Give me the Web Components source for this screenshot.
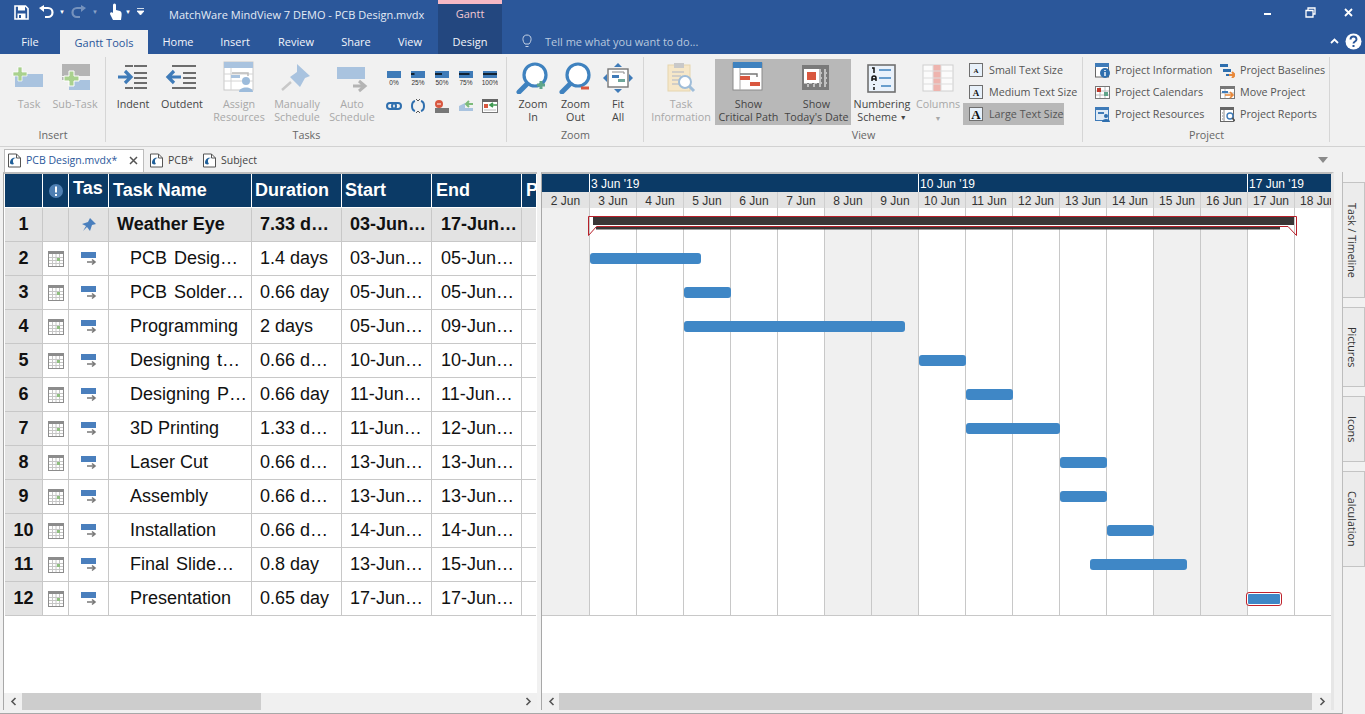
<!DOCTYPE html>
<html>
<head>
<meta charset="utf-8">
<title>MatchWare MindView 7 DEMO - PCB Design.mvdx</title>
<style>
  html, body { margin: 0; height: 100%; overflow: hidden; background: #f1f1f1; }
  body { display: flex; flex-direction: column; height: 714px; font-family: "Open Sans", "Liberation Sans", sans-serif; }
  mv-workspace { flex: 1; min-height: 0; }
</style>
</head>
<body>
<mv-titlebar></mv-titlebar>
<mv-ribbon>
  <mv-group label="Insert" style="width:106px;padding-left:6px">
    <mv-big icon="task" off w="46">Task</mv-big>
    <mv-big icon="subtask" off w="46">Sub-Task</mv-big>
  </mv-group>
  <mv-group label="Tasks" style="width:401px;padding-left:2px">
    <mv-big icon="indent" w="50">Indent</mv-big>
    <mv-big icon="outdent" w="48">Outdent</mv-big>
    <mv-big icon="assign" off w="66">Assign<br>Resources</mv-big>
    <mv-big icon="pin" off w="50">Manually<br>Schedule</mv-big>
    <mv-big icon="auto" off w="60">Auto<br>Schedule</mv-big>
    <mv-percent-grid></mv-percent-grid>
  </mv-group>
  <mv-group label="Zoom" style="width:137px;padding-left:5px">
    <mv-big icon="zoomin" w="42">Zoom<br>In</mv-big>
    <mv-big icon="zoomout" w="43">Zoom<br>Out</mv-big>
    <mv-big icon="fit" w="42">Fit<br>All</mv-big>
  </mv-group>
  <mv-group label="View" style="width:439px;padding-left:3px">
    <mv-big icon="info" off w="68">Task<br>Information</mv-big>
    <mv-big icon="critical" on w="67">Show<br>Critical Path</mv-big>
    <mv-big icon="today" on w="69">Show<br>Today's Date</mv-big>
    <mv-big icon="numbering" w="62">Numbering<br>Scheme <span style="font-size:7px;vertical-align:1px">▼</span></mv-big>
    <mv-big icon="columns" off w="50">Columns<br><span style="font-size:7px">▼</span></mv-big>
    <mv-stack style="width:101px">
      <mv-small icon="texts">Small Text Size</mv-small>
      <mv-small icon="textm">Medium Text Size</mv-small>
      <mv-small icon="textl" on>Large Text Size</mv-small>
    </mv-stack>
  </mv-group>
  <mv-group label="Project" style="width:247px;padding-left:6px;gap:0">
    <mv-stack style="width:125px">
      <mv-small icon="pinfo">Project Information</mv-small>
      <mv-small icon="pcal">Project Calendars</mv-small>
      <mv-small icon="pres">Project Resources</mv-small>
    </mv-stack>
    <mv-stack style="width:110px">
      <mv-small icon="pbase">Project Baselines</mv-small>
      <mv-small icon="pmove">Move Project</mv-small>
      <mv-small icon="prep">Project Reports</mv-small>
    </mv-stack>
  </mv-group>
</mv-ribbon>
<mv-doctabs></mv-doctabs>
<mv-workspace>
  <mv-task-table slot="left"></mv-task-table>
  <mv-gantt slot="right"></mv-gantt>
</mv-workspace>

<script>
const ICONS = {
  task: `<g transform="translate(-4 3)"><rect x="8" y="10" width="28" height="13" fill="#a9c3df"/><path d="M11 3h4v5h5v4h-5v5h-4v-5H6V8h5z" fill="#a9d18e" stroke="#fff" stroke-width=".7"/></g>`,
  subtask: `<rect x="5" y="3" width="28" height="12" fill="#b4b4b4"/><rect x="12" y="19" width="21" height="10" fill="#a9c3df"/><rect x="5" y="16" width="10" height="3" fill="#b4b4b4"/><path d="M12 10h5v5h5v5h-5v5h-5v-5H7v-5h5z" fill="#a9d18e" stroke="#fff"/>`,
  indent: `<path d="M10 5h8M10 27h8M19 5h13M19 12h13M19 17h13M19 22h13M19 27h13" stroke="#6d6d6d" stroke-width="2" fill="none"/><path d="M3 16h11M10 10l6 6-6 6" stroke="#3f7bb8" stroke-width="3.2" fill="none"/>`,
  outdent: `<path d="M8 5h24M8 27h24M19 12h13M19 17h13M19 22h13" stroke="#6d6d6d" stroke-width="2" fill="none"/><path d="M17 16H5M10 10l-6 6 6 6" stroke="#3f7bb8" stroke-width="3.2" fill="none"/>`,
  assign: `<g transform="translate(-2 0)"><rect x="5" y="1" width="29" height="28" fill="#fff" stroke="#c9c9c9"/><rect x="5" y="1" width="29" height="6" fill="#a9c3df"/><path d="M5 13h29M5 20h29M12 7v22" stroke="#d4d4d4"/><path d="M13 12h16v3" stroke="#bbb" stroke-width="1.5" fill="none"/><rect x="12" y="14" width="9" height="3" fill="#a9c3df"/><circle cx="27" cy="20" r="4" fill="#9cbbdb"/><path d="M20 31c0-6 14-6 14 0z" fill="#9cbbdb"/></g>`,
  pin: `<path d="M18 3l13 12-5 2-5 9-10-10 7-5z" fill="#a9c3df"/><path d="M12 21L3 29" stroke="#c8c8c8" stroke-width="2.5"/>`,
  auto: `<g transform="translate(0 3)"><rect x="3" y="3" width="28" height="12" fill="#a9c3df"/><path d="M19 22h11M25 17l6 5-6 5" stroke="#b4b4b4" stroke-width="3" fill="none"/></g>`,
  zoomin: `<circle cx="20" cy="14" r="11" fill="#fff" stroke="#3f82bf" stroke-width="3.2"/><path d="M12 23L4 31" stroke="#3f82bf" stroke-width="5" stroke-linecap="round"/><path d="M22 24h8M26 20v8" stroke="#5fa58a" stroke-width="3"/>`,
  zoomout: `<circle cx="20" cy="14" r="11" fill="#fff" stroke="#3f82bf" stroke-width="3.2"/><path d="M12 23L4 31" stroke="#3f82bf" stroke-width="5" stroke-linecap="round"/><path d="M23 27h8" stroke="#d9573f" stroke-width="3"/>`,
  fit: `<rect x="8" y="8" width="20" height="18" fill="#fff" stroke="#777" stroke-width="1.4"/><path d="M12 11h12v2" stroke="#888" fill="none"/><rect x="12" y="14" width="7" height="3" fill="#3f7bb8"/><rect x="18" y="18" width="7" height="3" fill="#6fa69a"/><path d="M18 2l4 4h-8zM18 32l4-4h-8zM3 17l4-4v8zM33 17l-4-4v8z" fill="#3f7bb8"/>`,
  info: `<rect x="5" y="4" width="22" height="26" fill="#f6e7c8" stroke="#e6d5ae"/><rect x="11" y="2" width="10" height="5" fill="#c9c9c9"/><path d="M9 11h12M9 15h9M9 19h7M9 23h7" stroke="#c6c6c6" stroke-width="1.5"/><circle cx="22" cy="21" r="6" fill="#fff" stroke="#9fbdd9" stroke-width="2"/><path d="M26 25l5 5" stroke="#9fbdd9" stroke-width="3"/>`,
  critical: `<g transform="translate(-2 0)"><rect x="4" y="2" width="29" height="27" fill="#fff" stroke="#8a8a8a"/><rect x="4" y="1" width="29" height="6" fill="#3f82bf"/><path d="M11 7v22" stroke="#aaa"/><path d="M11 13h17v3" stroke="#777" stroke-width="1.4" fill="none"/><rect x="11" y="15" width="10" height="4" fill="#d9573f"/><rect x="21" y="21" width="10" height="4" fill="#d9573f"/></g>`,
  today: `<g transform="translate(-2 0)"><rect x="5" y="4" width="27" height="25" fill="#7a7a7a"/><path d="M11 8v19M17 8v19M23 8v19M28 8v19M7 12h24M7 17h24M7 22h24" stroke="#d8d8d8" stroke-width="1.5" stroke-dasharray="3 2"/><rect x="7" y="8" width="15" height="14" fill="#fff"/><rect x="10" y="11" width="9" height="8" fill="#d9573f"/></g>`,
  numbering: `<g transform="translate(0 2)"><rect x="4" y="2" width="27" height="27" fill="#eaf2fb" stroke="#707070" stroke-width="1.6"/><path d="M15 7h12M15 15h12M17 23h10" stroke="#3f82bf" stroke-width="1.6"/><path d="M8 5h2v5" stroke="#111" stroke-width="1.5" fill="none"/><path d="M8 18v-3a2 2 0 014 0v3M8 16h4" stroke="#111" stroke-width="1.5" fill="none"/><path d="M10 21v1M10 24v3" stroke="#111" stroke-width="1.5"/></g>`,
  columns: `<g transform="translate(0 2)"><rect x="3" y="2" width="30" height="26" fill="#fbfbfb" stroke="#cfcfcf"/><rect x="13" y="2" width="8" height="26" fill="#eeb4ae"/><path d="M3 8h30M3 15h30M3 21h30" stroke="#ddd"/><path d="M13 2v26M21 2v26" stroke="#ddd"/></g>`,
  texts: `<rect x=".5" y=".5" width="13" height="13" fill="#e8f1fa" stroke="#6f6f6f"/><text x="7" y="10" font-family="Liberation Serif" font-size="7" font-weight="700" text-anchor="middle" fill="#111">A</text>`,
  textm: `<rect x=".5" y=".5" width="13" height="13" fill="#e8f1fa" stroke="#6f6f6f"/><text x="7" y="10.500" font-family="Liberation Serif" font-size="9" font-weight="700" text-anchor="middle" fill="#111">A</text>`,
  textl: `<rect x=".5" y=".5" width="13" height="13" fill="#e8f1fa" stroke="#6f6f6f"/><text x="7" y="12" font-family="Liberation Serif" font-size="13" font-weight="700" text-anchor="middle" fill="#111">A</text>`,
  pinfo: `<rect x=".5" y="1" width="13" height="13" fill="#fff" stroke="#666"/><rect y="0" width="14" height="4" fill="#3f7bb8"/><circle cx="10" cy="10" r="5" fill="#2f6fae"/><path d="M10 7v1M10 9v4" stroke="#fff" stroke-width="1.4"/>`,
  pcal: `<rect x=".5" y="1.500" width="14" height="12" fill="#fff" stroke="#777"/><path d="M5 2v11M10 2v11M1 6h13M1 10h13" stroke="#bbb"/><rect x="2" y="3" width="4" height="4" fill="#c0392b"/><rect x="9" y="7" width="4" height="4" fill="#5fa58a"/>`,
  pres: `<rect x=".5" y=".5" width="13" height="13" fill="#dfeaf5" stroke="#3f7bb8"/><rect y="0" width="14" height="3" fill="#3f7bb8"/><rect x="3" y="5" width="6" height="2" fill="#3f7bb8"/><circle cx="11" cy="9" r="2" fill="#2f6fae"/><path d="M7 15c0-4 8-4 8 0z" fill="#2f6fae"/>`,
  pbase: `<rect x="0" y="1" width="8" height="3" fill="#2f6fae"/><rect x="3" y="6" width="8" height="3" fill="#2f6fae"/><rect x="6" y="11" width="5" height="2" fill="#2f6fae"/><path d="M9 12h5M12 9l3 3-3 3" stroke="#e8883a" stroke-width="2" fill="none"/>`,
  pmove: `<rect x=".5" y="1.500" width="14" height="12" fill="#fff" stroke="#777"/><rect x="0" y="1" width="15" height="3" fill="#777"/><path d="M5 4v9M1 8h13" stroke="#bbb"/><rect x="2" y="6" width="6" height="2" fill="#3f7bb8"/><path d="M5 10h7M10 7l3 3-3 3" stroke="#e8883a" stroke-width="1.700" fill="none"/>`,
  prep: `<rect x=".5" y=".5" width="13" height="14" fill="#fff" stroke="#666"/><rect y="0" width="14" height="3" fill="#666"/><path d="M4 3v11M2 6h1M2 9h1M2 12h1" stroke="#888"/><circle cx="10" cy="9" r="3" fill="#fff" stroke="#3f7bb8" stroke-width="1.400"/><path d="M12 11l3 3" stroke="#555" stroke-width="1.600"/>`
}

class MvTitlebar extends HTMLElement {
  constructor() {
    super()
    this.attachShadow({mode: 'open'})
  }

  connectedCallback() {
    const white = '#fff'
    this.shadowRoot.innerHTML = `
      <style>
        :host { display: block; height: 54px; background: #2b579a; color: #fff; font-size: 11px; position: relative; }
        .top { display: flex; align-items: center; height: 28px; }
        .qat { display: flex; align-items: center; width: 169px; flex: none; padding-bottom: 4px; box-sizing: border-box; height: 28px; }
        .qat svg { display: block; flex: none; }
        .title { width: 269px; flex: none; font-size: 11px; color: #e4ebf5; white-space: nowrap; }
        .ctx { width: 64px; height: 28px; flex: none; background: #23477f; border-top: 4px solid #f5b8c4; box-sizing: border-box; color: #f3c9d2; text-align: center; line-height: 20px; }
        .win { margin-left: auto; display: flex; align-items: center; padding-bottom: 4px; }
        .tabs { display: flex; height: 26px; }
        .tab { flex: none; text-align: center; line-height: 28px; color: #f2f5fa; }
        .tab.active { background: #f1f1f1; color: #2b579a; height: 24px; margin-top: 2px; line-height: 25px; }
        .tab.design { background: #23477f; }
        .tell { margin-left: 19px; display: flex; align-items: center; gap: 12px; color: #b9c8de; }
        .right { margin-left: auto; display: flex; align-items: center; }
      </style>
      <div class="top">
        <div class="qat">
          <svg width="15" height="15" viewBox="0 0 15 15" style="margin-left:14px"><path d="M1 1h10.500l2.500 2.500V14H1z" fill="none" stroke="${white}" stroke-width="1.600"/><rect x="4" y="1" width="7" height="4.500" fill="${white}"/><rect x="3.500" y="8.500" width="8" height="5.500" fill="${white}"/><rect x="5" y="10" width="2" height="3" fill="#2b579a"/></svg>
          <svg width="16" height="15" viewBox="0 0 16 15" style="margin-left:9px"><path d="M5 3h5a4 4 0 010 9H7" stroke="${white}" stroke-width="2.200" fill="none"/><path d="M1 3l5-3v7z" fill="${white}"/></svg>
          <span style="margin-left:5px;width:9px;font-size:6px">▼</span>
          <svg width="16" height="15" viewBox="0 0 16 15" style="margin-left:3px;opacity:.35"><path d="M11 3H6a4 4 0 000 9h3" stroke="${white}" stroke-width="2.200" fill="none"/><path d="M15 3l-5-3v7z" fill="${white}"/></svg>
          <span style="margin-left:5px;width:12px;font-size:6px;opacity:.45">▼</span>
          <svg width="14" height="18" viewBox="0 0 14 18" style="margin-left:5px"><path d="M4 7V2a1.500 1.500 0 013 0v5l4 1c2 1 2 3 1 9H4L1 11c0-2 2-2 3-1z" fill="${white}"/></svg>
          <span style="margin-left:2px;width:12px;font-size:6px">▼</span>
          <svg width="7" height="8" viewBox="0 0 7 8"><path d="M0 .5h7M0 3h7l-3.500 4z" stroke="${white}" fill="${white}" stroke-width=".8"/></svg>
        </div>
        <div class="title">MatchWare MindView 7 DEMO - PCB Design.mvdx</div>
        <div class="ctx">Gantt</div>
        <div class="win">
          <svg width="10" height="4" viewBox="0 0 10 4" style="margin-right:31px;margin-top:4px"><rect y="1" width="7" height="2" fill="${white}"/></svg>
          <svg width="11" height="11" viewBox="0 0 11 11" style="margin-right:28px"><path d="M3 3V1h7v6H8M1 3.500h7v6.500H1z" stroke="${white}" stroke-width="1.300" fill="none"/></svg>
          <svg width="9" height="9" viewBox="0 0 9 9" style="margin-right:12px"><path d="M1 1l7 7M8 1L1 8" stroke="${white}" stroke-width="1.800"/></svg>
        </div>
      </div>
      <div class="tabs">
        <div class="tab" style="width:60px">File</div>
        <div class="tab active" style="width:88px">Gantt Tools</div>
        <div class="tab" style="width:60px">Home</div>
        <div class="tab" style="width:54px">Insert</div>
        <div class="tab" style="width:68px">Review</div>
        <div class="tab" style="width:52px">Share</div>
        <div class="tab" style="width:56px">View</div>
        <div class="tab design" style="width:64px">Design</div>
        <div class="tell">
          <svg width="12" height="14" viewBox="0 0 12 14"><path d="M4 10C1 7 1 1 6 1s5 6 2 9zM4.500 12.500h3" stroke="#c5d2e5" fill="none"/></svg>
          <span>Tell me what you want to do...</span>
        </div>
        <div class="right">
          <svg width="9" height="6" viewBox="0 0 9 6" style="margin-right:6px"><path d="M1 5l3.500-3.500L8 5" stroke="${white}" stroke-width="1.800" fill="none"/></svg>
          <svg width="17" height="17" viewBox="0 0 17 17" style="margin-right:3px"><circle cx="8.500" cy="8.500" r="8" fill="${white}"/><path d="M5.500 6.500a3 3 0 116 0c0 2-3 2-3 4" stroke="#2b579a" stroke-width="1.900" fill="none"/><rect x="7.500" y="12" width="2" height="2" fill="#2b579a"/></svg>
        </div>
      </div>
    `
  }
}

class MvRibbon extends HTMLElement {
  constructor() {
    super()
    this.attachShadow({mode: 'open'}).innerHTML = `
      <style>
        :host { display: flex; height: 93px; box-sizing: border-box; background: #f1f1f1; border-bottom: 1px solid #d2d2d2; font-size: 10.75px; color: #444; flex: none; }
      </style>
      <slot></slot>
    `
  }
}

class MvGroup extends HTMLElement {
  constructor() {
    super()
    this.attachShadow({mode: 'open'})
  }

  connectedCallback() {
    this.shadowRoot.innerHTML = `
      <style>
        :host { display: block; box-sizing: border-box; position: relative; flex: none; }
        :host::after { content: ''; position: absolute; right: 0; top: 3px; bottom: 4px; width: 1px; background: #d6d6d6; }
        .items { display: flex; height: 71px; padding-top: 5px; box-sizing: border-box; }
        .label { position: absolute; left: 0; right: 0; top: 74px; text-align: center; color: #666; }
      </style>
      <div class="items"><slot></slot></div>
      <div class="label">${this.getAttribute('label')}</div>
    `
  }
}

class MvBig extends HTMLElement {
  constructor() {
    super()
    this.attachShadow({mode: 'open'})
  }

  connectedCallback() {
    const off = this.hasAttribute('off')
    const on = this.hasAttribute('on')
    this.shadowRoot.innerHTML = `
      <style>
        :host { display: block; flex: none; width: ${this.getAttribute('w')}px; height: 66px; text-align: center; color: ${off ? '#a8a8a8' : '#444'}; ${on ? 'background:#b8b8b8;' : ''} line-height: 13px; white-space: nowrap; }
        svg { display: block; margin: 2px auto 4px; }
      </style>
      <svg width="36" height="33" viewBox="0 0 36 33">${ICONS[this.getAttribute('icon')]}</svg>
      <slot></slot>
    `
  }
}

class MvStack extends HTMLElement {
  constructor() {
    super()
    this.attachShadow({mode: 'open'}).innerHTML = `
      <style>:host { display: flex; flex-direction: column; flex: none; }</style>
      <slot></slot>
    `
  }
}

class MvSmall extends HTMLElement {
  constructor() {
    super()
    this.attachShadow({mode: 'open'})
  }

  connectedCallback() {
    const on = this.hasAttribute('on')
    this.shadowRoot.innerHTML = `
      <style>
        :host { display: flex; align-items: center; gap: 5px; height: 22px; padding-left: 6px; box-sizing: border-box; white-space: nowrap; color: #555; ${on ? 'background:#b8b8b8;' : ''} }
        svg { flex: none; }
      </style>
      <svg width="15" height="15" viewBox="0 0 15 15">${ICONS[this.getAttribute('icon')]}</svg>
      <slot></slot>
    `
  }
}

class MvPercentGrid extends HTMLElement {
  constructor() {
    super()
    this.attachShadow({mode: 'open'})
  }

  connectedCallback() {
    const bar = (pct, dark) => `
      <div class="cell"><svg width="16" height="16" viewBox="0 0 16 16">
        <rect x="1" y="1" width="14" height="7" fill="#3f7bb8"/>${dark ? `<rect x="1" y="${dark}" width="${pct / 100 * 14}" height="2" fill="#123"/>` : ''}
        <text x="8" y="14.500" font-family="Liberation Sans" font-size="6.500" text-anchor="middle" fill="#333">${pct}%</text>
      </svg></div>`
    this.shadowRoot.innerHTML = `
      <style>
        :host { display: grid; grid-template-columns: repeat(5, 24px); grid-auto-rows: 28px; padding-top: 11px; flex: none; }
        .cell { display: flex; justify-content: center; align-items: flex-start; }
      </style>
      ${bar(0)}${bar(25, 3)}${bar(50, 3)}${bar(75, 3)}${bar(100, 3)}
      <div class="cell"><svg width="16" height="16" viewBox="0 0 16 16"><rect x="1" y="5" width="9" height="6" rx="3" stroke="#2f6fae" stroke-width="2" fill="none"/><rect x="6" y="5" width="9" height="6" rx="3" stroke="#2f6fae" stroke-width="2" fill="none"/></svg></div>
      <div class="cell"><svg width="16" height="16" viewBox="0 0 16 16"><path d="M5 3C1 4 1 12 5 13M11 3c4 1 4 9 0 10" stroke="#2f6fae" stroke-width="2" fill="none"/><path d="M6 1l2 2M10 1L8 3M6 15l2-2M10 15l-2-2" stroke="#555"/></svg></div>
      <div class="cell"><svg width="16" height="16" viewBox="0 0 16 16"><rect x="1" y="10" width="14" height="5" fill="#777"/><circle cx="5" cy="6" r="4" fill="#d9573f"/><path d="M3 6h4" stroke="#fff"/></svg></div>
      <div class="cell"><svg width="16" height="16" viewBox="0 0 16 16"><path d="M1 8l6-3v8H1z" fill="#a9c3df"/><rect x="7" y="10" width="8" height="3" fill="#a9c3df"/><path d="M15 6H8M11 3L8 6l3 3" stroke="#7dbb7a" stroke-width="2" fill="none"/></svg></div>
      <div class="cell"><svg width="16" height="16" viewBox="0 0 16 16"><rect x=".5" y="1.500" width="15" height="13" fill="#fff" stroke="#777"/><rect y="1" width="16" height="3" fill="#666"/><rect x="2" y="6" width="4" height="4" fill="#d9573f"/><path d="M15 7H8M11 5L8 7l3 2" stroke="#3f9a52" stroke-width="1.600" fill="none"/><path d="M2 12h12" stroke="#bbb"/></svg></div>
    `
  }
}

class MvDoctabs extends HTMLElement {
  constructor() {
    super()
    this.attachShadow({mode: 'open'})
  }

  connectedCallback() {
    const icon = `<svg width="15" height="15" viewBox="0 0 15 15" style="flex:none;margin-top:2px"><path d="M1.500 1h8l4 4v9h-12z" fill="#fff" stroke="#555"/><path d="M9.500 1v4h4" fill="none" stroke="#555"/><path d="M3 10c0-5 4-6 6-5-3 0-4 3-2 6-2 1-4 0-4-1z" fill="#1f5f99"/></svg>`
    this.shadowRoot.innerHTML = `
      <style>
        :host { display: flex; height: 25px; flex: none; box-sizing: border-box; padding-left: 4px; align-items: flex-end; font-size: 10.5px; color: #444; position: relative; }
        .t { display: flex; align-items: center; gap: 4px; height: 22px; padding-bottom: 3px; box-sizing: border-box; white-space: nowrap; }
        .t.a { width: 140px; background: #fff; border: 1px solid #bdbdbd; border-bottom: 0; color: #2b579a; padding-left: 2px; height: 23px; }
        .x { margin-left: auto; margin-right: 5px; margin-top: 2px; }
        .arrow { margin-left: auto; margin-right: 37px; margin-bottom: 9px; width: 0; height: 0; border: 5px solid transparent; border-top: 6px solid #8a8a8a; border-bottom: 0; }
      </style>
      <div class="t a">${icon}<span>PCB Design.mvdx*</span>
        <svg class="x" width="9" height="9" viewBox="0 0 9 9"><path d="M1 1l7 7M8 1L1 8" stroke="#555" stroke-width="1.500"/></svg>
      </div>
      <div class="t" style="margin-left:5px;width:53px">${icon}<span>PCB*</span></div>
      <div class="t">${icon}<span>Subject</span></div>
      <div class="arrow"></div>
    `
  }
}

class MvScrollbar extends HTMLElement {
  constructor() {
    super()
    this.attachShadow({mode: 'open'})
  }

  connectedCallback() {
    this.shadowRoot.innerHTML = `
      <style>
        :host { display: flex; height: 17px; flex: none; background: #f0f0f0; align-items: stretch; }
        .b { width: 18px; flex: none; display: flex; align-items: center; justify-content: center; }
        .track { flex: 1; min-width: 0; }
        .thumb { height: 100%; background: #cdcdcd; }
      </style>
      <div class="b"><svg width="7" height="9" viewBox="0 0 7 9"><path d="M5.500 1L2 4.500 5.500 8" stroke="#555" stroke-width="1.600" fill="none"/></svg></div>
      <div class="track"><div class="thumb" style="margin-left:${this.getAttribute('start') || 0}px;width:${this.getAttribute('size')}px"></div></div>
      <div class="b"><svg width="7" height="9" viewBox="0 0 7 9"><path d="M1.500 1L5 4.500 1.500 8" stroke="#555" stroke-width="1.600" fill="none"/></svg></div>
    `
  }
}

class MvWorkspace extends HTMLElement {
  constructor() {
    super()
    this.attachShadow({mode: 'open'}).innerHTML = `
      <style>
        :host { display: flex; background: #f1f1f1; }
        .frame { display: flex; flex: none; width: 1342px; box-sizing: border-box; padding-left: 3px; padding-bottom: 3px; border-bottom: 1px solid #a8a8a8; }
        .side { flex: 1; border-left: 1px solid #bdbdbd; padding-top: 10px; display: flex; flex-direction: column; gap: 9px; }
        .pane { background: #fff; border-top: 2px solid #bdbdbd; box-sizing: border-box; display: flex; flex-direction: column; }
        .left { width: 534px; border-left: 1px solid #a8a8a8; }
        .right { width: 793px; margin-left: 4px; border-left: 1px solid #a8a8a8; border-right: 3px solid #e6e6e6; }
        .tab { background: #ececec; border: 1px solid #c4c4c4; border-left: 0; writing-mode: vertical-rl; font-size: 10.75px; color: #333; text-align: center; box-sizing: border-box; line-height: 18px; padding-right: 3px; }
      </style>
      <div class="frame">
        <div class="pane left"><slot name="left"></slot><mv-scrollbar start="0" size="239"></mv-scrollbar></div>
        <div class="pane right"><slot name="right"></slot><mv-scrollbar start="-1" size="753"></mv-scrollbar></div>
      </div>
      <div class="side">
        <div class="tab" style="height:116px">Task / Timeline</div>
        <div class="tab" style="height:80px">Pictures</div>
        <div class="tab" style="height:66px">Icons</div>
        <div class="tab" style="height:96px">Calculation</div>
      </div>
    `
  }
}

const TASKS = [
  ['1', 'Weather Eye', '7.33 d…', '03-Jun…', '17-Jun…'],
  ['2', 'PCB Desig…', '1.4 days', '03-Jun…', '05-Jun…'],
  ['3', 'PCB Solder…', '0.66 day', '05-Jun…', '05-Jun…'],
  ['4', 'Programming', '2 days', '05-Jun…', '09-Jun…'],
  ['5', 'Designing t…', '0.66 d…', '10-Jun…', '10-Jun…'],
  ['6', 'Designing P…', '0.66 day', '11-Jun…', '11-Jun…'],
  ['7', '3D Printing', '1.33 d…', '11-Jun…', '12-Jun…'],
  ['8', 'Laser Cut', '0.66 d…', '13-Jun…', '13-Jun…'],
  ['9', 'Assembly', '0.66 d…', '13-Jun…', '13-Jun…'],
  ['10', 'Installation', '0.66 d…', '14-Jun…', '14-Jun…'],
  ['11', 'Final Slide…', '0.8 day', '13-Jun…', '15-Jun…'],
  ['12', 'Presentation', '0.65 day', '17-Jun…', '17-Jun…']
]

class MvTaskTable extends HTMLElement {
  constructor() {
    super()
    this.attachShadow({mode: 'open'})
  }

  connectedCallback() {
    const calendar = `<svg width="16" height="16" viewBox="0 0 16 16"><rect x=".5" y=".5" width="15" height="15" fill="#fff" stroke="#8c8c8c"/><rect y="0" width="16" height="3" fill="#8c8c8c"/><path d="M4.500 3v12M8 3v12M11.500 3v12M1 6.500h14M1 9.500h14M1 12.500h14" stroke="#c6c6c6"/><rect x="9" y="7" width="3" height="3" fill="#8fbf7f"/></svg>`
    const manual = `<svg width="16" height="14" viewBox="0 0 16 14"><rect width="15" height="6" fill="#4a7fbd"/><path d="M6 10h8M11 7.500l3 2.500-3 2.500" stroke="#7a7a7a" stroke-width="1.600" fill="none"/></svg>`
    const pin = `<svg width="16" height="16" viewBox="0 0 16 16"><path d="M9 1l6 6-4 1-2 6-3-4-4 4 3-5-4-2 6-2z" fill="#4a7fbd"/></svg>`
    const rows = TASKS.map((task, i) => `
      <div class="row ${i === 0 ? 'summary' : ''}">
        <div class="c num">${task[0]}</div>
        <div class="c ic">${i === 0 ? '' : calendar}</div>
        <div class="c ic">${i === 0 ? pin : manual}</div>
        <div class="c" style="padding-left:${i === 0 ? 8 : 21}px;${task[1].endsWith('…') ? 'word-spacing:2px' : ''}">${task[1]}</div>
        <div class="c" style="padding-left:8px">${task[2]}</div>
        <div class="c" style="padding-left:8px">${task[3]}</div>
        <div class="c" style="padding-left:9px">${task[4]}</div>
        <div class="c end"></div>
      </div>`).join('')
    this.shadowRoot.innerHTML = `
      <style>
        :host { display: block; flex: 1; min-height: 0; font-family: "Liberation Sans", Arial, sans-serif; font-size: 18px; color: #111; overflow: hidden; }
        .row { display: grid; grid-template-columns: 38px 26px 40px 143px 90px 90px 90px 14px; height: 34px; box-sizing: border-box; border-bottom: 1px solid #c8c8c8; }
        .c { border-right: 1px solid #c8c8c8; display: flex; align-items: center; white-space: nowrap; overflow: hidden; box-sizing: border-box; min-width: 0; }
        .end { border-right: 0; }
        .num { background: #e3e3e3; font-weight: 700; justify-content: center; }
        .ic { justify-content: center; }
        .summary { background: #e3e3e3; font-weight: 700; }
        .head { background: #0b3a66; color: #fff; font-weight: 700; border-bottom: 1px solid #fff; height: 34px; }
        .head .c { border-right: 1px solid #fff; padding-left: 4px; }
        .head .end { border-right: 0; }
        .wrap { margin-left: 1px; width: 531px; }
      </style>
      <div class="wrap">
        <div class="row head">
          <div class="c"></div>
          <div class="c ic" style="padding:0"><svg width="16" height="16" viewBox="0 0 16 16"><circle cx="8" cy="8" r="7" fill="#4f7fb3"/><path d="M8 3.500v6M8 11v2" stroke="#fff" stroke-width="2"/></svg></div>
          <div class="c" style="align-items:flex-start;padding-top:4px">Tas</div>
          <div class="c">Task Name</div>
          <div class="c" style="padding-left:3px">Duration</div>
          <div class="c" style="padding-left:3px">Start</div>
          <div class="c">End</div>
          <div class="c end">P</div>
        </div>
        ${rows}
      </div>
    `
  }
}

class MvGantt extends HTMLElement {
  constructor() {
    super()
    this.attachShadow({mode: 'open'})
  }

  connectedCallback() {
    const days = [2, 3, 4, 5, 6, 7, 8, 9, 10, 11, 12, 13, 14, 15, 16, 17, 18]
    const weekend = [2, 8, 9, 15, 16]
    const bars = [
      [590, 111, 253], [684, 47, 287], [684, 221, 321], [919, 47, 355], [966, 47, 389],
      [966, 94, 423], [1060, 47, 457], [1060, 47, 491], [1107, 47, 525], [1090, 97, 559]
    ]
    this.shadowRoot.innerHTML = `
      <style>
        :host { display: block; flex: 1; min-height: 0; font-family: "Liberation Sans", Arial, sans-serif; font-size: 12px; overflow: hidden; position: relative; }
        .months, .days, .grid { display: grid; grid-template-columns: 48px repeat(16, 47px); width: 800px; }
        .months { height: 18px; background: #0b3a66; color: #fff; line-height: 20px; }
        .months div { border-right: 1px solid #fff; padding-left: 1px; white-space: nowrap; box-sizing: border-box; }
        .days { height: 16px; background: #e3e3e3; color: #333; line-height: 18px; }
        .days div { border-right: 1px solid #cfcfcf; text-align: center; white-space: nowrap; box-sizing: border-box; }
        .grid { height: 408px; border-bottom: 1px solid #c8c8c8; box-sizing: border-box; }
        .grid div { border-right: 1px solid #c8c8c8; box-sizing: border-box; }
        .grid .we { background: #f0f0f0; }
        .bar { position: absolute; height: 11px; background: #3f87c6; border-radius: 3px; }
        svg.sum { position: absolute; left: 46px; top: 42px; }
        .last { position: absolute; left: 705px; top: 419px; width: 32px; height: 10px; background: #3f87c6; border: 1px solid #fff; outline: 1px solid #c0222c; border-radius: 2px; }
      </style>
      <div class="months">
        <div></div>
        <div style="grid-column: span 7">3 Jun '19</div>
        <div style="grid-column: span 7">10 Jun '19</div>
        <div style="grid-column: span 2;border-right:0">17 Jun '19</div>
      </div>
      <div class="days">${days.map(d => `<div>${d} Jun</div>`).join('')}</div>
      <div class="grid">${days.map(d => `<div class="${weekend.includes(d) ? 'we' : ''}"></div>`).join('')}</div>
      <svg class="sum" width="712" height="22" viewBox="0 0 712 22">
        <rect x="5" y="1" width="701" height="8" fill="#3a3636"/>
        <path d="M8 12.300h684" stroke="#3a3636" stroke-width="2.600"/>
        <path d="M8 9.500h692M2 17l7-7.500" stroke="#fff"/>
        <path d="M.5 19.500V.5H708.500V19.500L700 10.500H8.500z" fill="none" stroke="#b8202a"/>
      </svg>
      ${bars.map(b => `<div class="bar" style="left:${b[0] - 542}px;width:${b[1]}px;top:${b[2] - 174}px"></div>`).join('')}
      <div class="last"></div>
    `
  }
}

customElements.define('mv-titlebar', MvTitlebar)
customElements.define('mv-ribbon', MvRibbon)
customElements.define('mv-group', MvGroup)
customElements.define('mv-big', MvBig)
customElements.define('mv-stack', MvStack)
customElements.define('mv-small', MvSmall)
customElements.define('mv-percent-grid', MvPercentGrid)
customElements.define('mv-doctabs', MvDoctabs)
customElements.define('mv-scrollbar', MvScrollbar)
customElements.define('mv-workspace', MvWorkspace)
customElements.define('mv-task-table', MvTaskTable)
customElements.define('mv-gantt', MvGantt)
</script>
</body>
</html>
